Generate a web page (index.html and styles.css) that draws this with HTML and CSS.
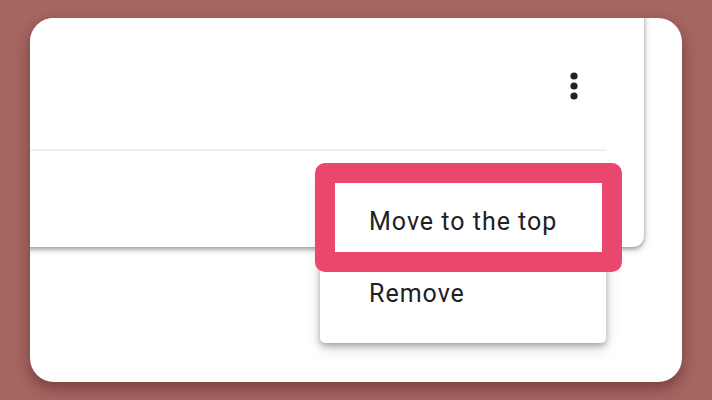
FILE: index.html
```html
<!DOCTYPE html>
<html lang="en">
<head>
    <meta charset="UTF-8">
    <meta name="viewport" content="width=device-width, initial-scale=1.0">
    <title>Card menu</title>
    <link rel="stylesheet" href="styles.css">
</head>
<body>

    <div class="frame">
        <div class="card">
            <div class="card-head">
                <button class="kebab" aria-label="More">
                    <svg width="8" height="28" viewBox="0 0 8 28">
                        <circle cx="4" cy="4" r="3.6"/>
                        <circle cx="4" cy="14" r="3.6"/>
                        <circle cx="4" cy="24" r="3.6"/>
                    </svg>
                </button>
            </div>
            <div class="divider"></div>
            <div class="card-body"></div>
        </div>

        <ul class="menu">
            <li class="menu-item">Move to the top</li>
            <li class="menu-item">Remove</li>
        </ul>

        <!-- highlight around the first item -->
        <div class="highlight"></div>
    </div>

</body>
</html>
```

FILE: styles.css
```css
body {
    margin: 0;
    height: 400px;
    overflow: hidden;
    background-color: #a56561;
    font-family: Roboto, "Noto Sans", sans-serif;
}

.frame {
    position: relative;
    margin: 18px 30px 0 30px;
    height: 364px;
    background-color: #fff;
    border-radius: 24px;
    overflow: hidden;
    box-shadow: 0 6px 14px rgba(60, 20, 20, 0.45);
}

.card {
    margin: -20px 0 0 -20px;
    width: 634px;
    height: 249px;
    background-color: #fff;
    border-radius: 0 0 11px 0;
    box-shadow: 0 2px 4px rgba(0, 0, 0, 0.35), 1px 3px 10px rgba(0, 0, 0, 0.12);
    display: flex;
    flex-direction: column;
}

.card-head {
    height: 151px;
    display: flex;
    justify-content: flex-end;
    align-items: flex-start;
    padding-right: 66px;
    box-sizing: border-box;
}

.kebab {
    margin-top: 74px;
    padding: 0;
    border: none;
    background: none;
    fill: #202124;
    line-height: 0;
}

.divider {
    height: 2px;
    margin-right: 38px;
    background-color: #efefef;
}

.card-body {
    flex: 1;
}

.menu {
    position: absolute;
    left: 290px;
    top: 155px;
    width: 286px;
    margin: 0;
    padding: 12px 0 14px;
    list-style: none;
    background-color: #fff;
    border-radius: 5px;
    box-shadow: 0 3px 6px rgba(0, 0, 0, 0.3), 0 6px 16px rgba(0, 0, 0, 0.12);
}

.menu-item {
    height: 72px;
    padding-left: 49px;
    display: flex;
    align-items: center;
    font-size: 25px;
    letter-spacing: 1px;
    color: #202124;
}

.highlight {
    position: absolute;
    left: 285px;
    top: 145px;
    width: 267px;
    height: 69px;
    border: 20px solid #e9476e;
    border-radius: 10px;
}
```
